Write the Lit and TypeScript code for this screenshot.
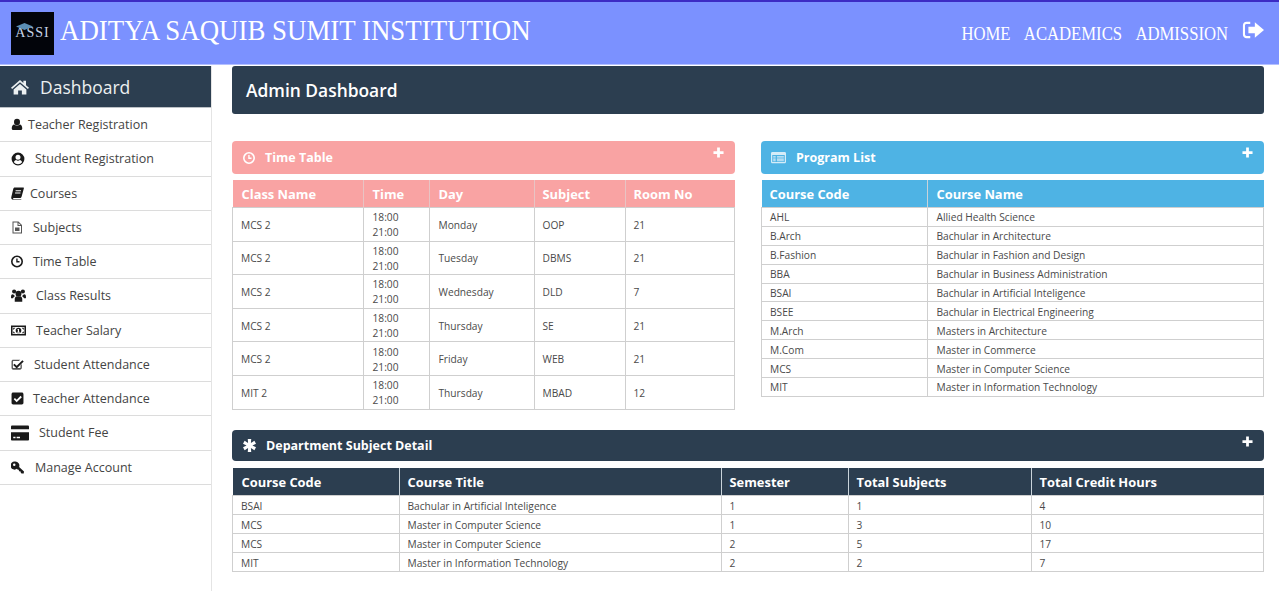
import {LitElement, html, svg, css} from 'lit';
import {customElement} from 'lit/decorators.js';

const icons: Record<string, unknown> = {
    home: svg`<path d="M12 2.500 0 13l1.500 1.800L12 5.800l10.500 9L24 13l-4-3.400V3.500h-3.500v3z"/><path d="M12 8 3.500 15.200V22h6v-5.500h5V22h6v-6.800z"/>`,
    user: svg`<ellipse cx="12" cy="7" rx="6" ry="6.500"/><path d="M4.500 23C2.500 23 1.500 21.800 1.500 20c0-4.500 1.700-8 5-8 1.300 1.300 3.300 2.200 5.500 2.200s4.200-.9 5.500-2.200c3.300 0 5 3.500 5 8 0 1.800-1 3-3 3z"/>`,
    circleUser: svg`<path fill-rule="evenodd" d="M12 1a11 11 0 1 0 0 22 11 11 0 0 0 0-22zm0 3.500a4.300 4.300 0 1 1 0 8.600 4.300 4.300 0 0 1 0-8.600zM5 17.500c.6-2.300 2.200-3.600 3.700-3.800 1 .7 2.100 1.100 3.300 1.100s2.300-.4 3.300-1.100c1.500.2 3.100 1.500 3.700 3.800A8.800 8.800 0 0 1 12 20.800a8.800 8.800 0 0 1-7-3.300z"/>`,
    book: svg`<path d="M7 1h15.500c1 0 1.500.8 1.200 1.800L19.500 18c-.5 1.600-1.500 2.500-3.200 2.500H5c-.8 0-1.200.4-1.200 1s.4 1 1.200 1h14v1H4c-2.500 0-4-2-3.500-4.500L4 4c.4-1.800 1.500-3 3-3zm1.500 5v2h10V6zm-1 4v2h10v-2z" fill-rule="evenodd"/>`,
    file: svg`<path fill="#555" fill-rule="evenodd" d="M3 0h12l7 7v17H3zm2 2v20h15V9h-7V2zM15 3v4h4zM8 12h9v7H8z"/>`,
    clock: svg`<path fill-rule="evenodd" d="M12 0a12 12 0 1 0 0 24 12 12 0 0 0 0-24zm0 3.200a8.800 8.800 0 1 1 0 17.600 8.800 8.800 0 0 1 0-17.600zM10.500 6v7.800h6.500v-2.600h-3.800V6z"/>`,
    users: svg`<circle cx="12" cy="9" r="4.800"/><circle cx="5" cy="5.500" r="3.300"/><circle cx="19" cy="5.500" r="3.300"/><path d="M6 22v-4.500c0-2.500 1.500-4 3-4.500 1.800 1 4.200 1 6 0 1.500.5 3 2 3 4.500V22zM0 15c0-3 .8-5 2.500-5 1.300.8 2 1 3 1-.3 1.500 0 2.300.5 3-1.500.5-2.300 1.300-3 2.500H1c-.6 0-1-.6-1-1.500zm24 0c0-3-.8-5-2.500-5-1.300.8-2 1-3 1 .3 1.500 0 2.300-.5 3 1.500.5 2.300 1.300 3 2.500h2c.6 0 1-.6 1-1.500z"/>`,
    money: svg`<path fill-rule="evenodd" d="M0 4h24v16H0zm2.500 2.500v11h19v-11zM12 7.500a4.500 4.500 0 1 1 0 9 4.500 4.500 0 0 1 0-9zM3.500 7.500h3.500l-3.500 3.500zm17 0v3.500L17 7.500zm-17 9V13L7 16.500zm17 0H17l3.500-3.500z"/><path d="M11 9.500h1.800v4.500H14v1.500h-4V14h1v-3h-1z" fill="#fff"/>`,
    checkO: svg`<path d="M4 3h13l-2.400 2.500H4.500c-.6 0-1 .4-1 1v11c0 .6.400 1 1 1h12c.6 0 1-.4 1-1v-4l2.500-2.500V18c0 2-1.500 3.500-3.500 3.500H4C2 21.500 1 20 1 18V6c0-1.700 1.300-3 3-3z" fill="#555"/><path d="m6.500 10.500 4 4L21 4l2.500 2.500-13 13-6.500-6.500z"/>`,
    check: svg`<path fill-rule="evenodd" d="M4 1h16c1.700 0 3 1.300 3 3v16c0 1.700-1.300 3-3 3H4c-1.700 0-3-1.300-3-3V4c0-1.700 1.300-3 3-3zm6.500 18L20 9.500 17.700 7l-7.200 7.200-3.200-3.200L5 13.400z"/>`,
    card: svg`<path d="M1.500 2h21c.8 0 1.500.7 1.500 1.500V7H0V3.500C0 2.700.7 2 1.500 2zM0 11h24v9.500c0 .8-.7 1.500-1.500 1.500h-21C.7 22 0 21.300 0 20.500zm3 6v2h3v-2zm4.500 0v2h4.500v-2z"/>`,
    key: svg`<path fill-rule="evenodd" d="M8 1a7.500 7.500 0 0 1 7 10l9 8.500-.5 3.500h-4l-1.500-1.500v-2h-2l-1.500-1.500v-2h-2l-1.500-1.500A7.500 7.500 0 1 1 8 1zM6 4.500a2.300 2.300 0 1 0 0 4.600 2.300 2.300 0 0 0 0-4.600z"/>`,
    signOut: svg`<path d="M9 3H5C2.500 3 1 4.800 1 7v10c0 2.200 1.500 4 4 4h4v-2.500H5c-1 0-1.700-.7-1.700-1.500V7c0-.8.7-1.500 1.700-1.500h4z"/><path d="M14 3.500 24 12l-10 8.500V15.500H7v-7h7z"/>`,
    plus: svg`<path d="M9 1h6v8h8v6h-8v8H9v-8H1V9h8z"/>`,
    asterisk: svg`<path d="M8.800 0h6.400l-.6 7.400 6.400-4 3.200 5.500-6.800 3.100 6.800 3.100-3.200 5.500-6.400-4 .6 7.400H8.800l.6-7.400-6.400 4-3.200-5.500L6.600 12-.2 8.900 3 3.400l6.400 4z"/>`,
    list: svg`<path fill-rule="evenodd" d="M2 3h20c1 0 2 1 2 2v14c0 1-1 2-2 2H2c-1 0-2-1-2-2V5c0-1 1-2 2-2zm0 5v11h20V8z"/><path d="M3.500 10h4v2h-4zm6 0h11v2h-11zm-6 3.500h4v2h-4zm6 0h11v2h-11zm-6 3h4v1.500h-4zm6 0h11v1.500h-11z"/>`,
};

function icon(name: string) {
    return html`<svg class="icon" viewBox="0 0 24 24" fill="currentColor">${icons[name]}</svg>`;
}

// icon size and gap differ per row in the original, so each row carries its own classes
const menu = [
    ['user', 'Teacher Registration', 'g5', 'i12'],
    ['circleUser', 'Student Registration', 'g10', 'i14'],
    ['book', 'Courses', 'g6', 'i13'],
    ['file', 'Subjects', 'g10', 'i12'],
    ['clock', 'Time Table', 'g10', 'i12'],
    ['users', 'Class Results', 'g10', 'i15'],
    ['money', 'Teacher Salary', 'g10', 'i15'],
    ['checkO', 'Student Attendance', 'g10', 'i13'],
    ['check', 'Teacher Attendance', 'g9', 'i13'],
    ['card', 'Student Fee', 'g10', 'i18'],
    ['key', 'Manage Account', 'g11', 'i13'],
];

const timeTable = [
    ['MCS 2', 'Monday', 'OOP', '21'],
    ['MCS 2', 'Tuesday', 'DBMS', '21'],
    ['MCS 2', 'Wednesday', 'DLD', '7'],
    ['MCS 2', 'Thursday', 'SE', '21'],
    ['MCS 2', 'Friday', 'WEB', '21'],
    ['MIT 2', 'Thursday', 'MBAD', '12'],
];

const programs = [
    ['AHL', 'Allied Health Science'],
    ['B.Arch', 'Bachular in Architecture'],
    ['B.Fashion', 'Bachular in Fashion and Design'],
    ['BBA', 'Bachular in Business Administration'],
    ['BSAI', 'Bachular in Artificial Inteligence'],
    ['BSEE', 'Bachular in Electrical Engineering'],
    ['M.Arch', 'Masters in Architecture'],
    ['M.Com', 'Master in Commerce'],
    ['MCS', 'Master in Computer Science'],
    ['MIT', 'Master in Information Technology'],
];

const subjects = [
    ['BSAI', 'Bachular in Artificial Inteligence', '1', '1', '4'],
    ['MCS', 'Master in Computer Science', '1', '3', '10'],
    ['MCS', 'Master in Computer Science', '2', '5', '17'],
    ['MIT', 'Master in Information Technology', '2', '2', '7'],
];

@customElement('app-root')
export class AppRoot extends LitElement {

    static override styles = css`
        :host {
            display: block;
            height: 591px;
            overflow: hidden;
            background: #fff;
            font-family: "Open Sans", "Noto Sans", sans-serif;
            color: #444;
        }

        .icon {
            display: block;
            flex: none;
            width: 14px;
            height: 14px;
        }

        /* top bar */
        .topbar {
            height: 65px;
            box-sizing: border-box;
            border-top: 2px solid #3c2bc4;
            border-bottom: 1px solid #b4c0ff;
            background: #7b91ff;
            display: flex;
            align-items: center;
            padding: 0 15px 0 11px;
            color: #fff;
            font-family: "Liberation Serif", serif;
        }

        .logo {
            width: 43px;
            height: 43px;
            background: #02040a;
            color: #c5d3e6;
            display: flex;
            align-items: center;
            justify-content: center;
            font-size: 14px;
            letter-spacing: 1px;
            position: relative;
            flex: none;
        }

        .logo svg {
            position: absolute;
            left: 5px;
            top: 11px;
            width: 17px;
            height: 9px;
        }

        /* the original face is narrower than Liberation Serif */
        .brand {
            font-size: 29px;
            margin-left: 6px;
            flex: 1;
            white-space: nowrap;
            transform: scaleX(.927);
            transform-origin: left center;
            margin-top: -5px;
        }

        .nav {
            display: flex;
            align-items: center;
            font-size: 19.400px;
            gap: 15.500px;
            padding-top: 2px;
            transform: scaleX(.86);
            transform-origin: right center;
        }

        .logout {
            width: 22px;
            height: 22px;
            margin-top: -7px;
            margin-left: 14px;
            flex: none;
        }

        .body {
            display: flex;
            height: 526px;
        }

        /* sidebar */
        .side {
            width: 212px;
            flex: none;
            box-sizing: border-box;
            border-right: 1px solid #e4e4e4;
            margin-top: 1px;
        }

        .side-head {
            height: 41px;
            background: #2c3e50;
            color: #ecf0f1;
            display: flex;
            align-items: center;
            padding-left: 11px;
            font-size: 17.500px;
            gap: 11px;
            border-bottom: 1px solid #bcc1c6;
        }

        .side-head .icon {
            width: 18px;
            height: 18px;
        }

        .item {
            height: 34.250px;
            box-sizing: border-box;
            border-bottom: 1px solid #dcdcdc;
            display: flex;
            align-items: center;
            padding-left: 11px;
            font-size: 12.500px;
            color: #444;
        }

        .item .icon {
            color: #1a1a1a;
        }

        .i12 .icon { width: 12px; height: 13px; }
        .i13 .icon { width: 13px; height: 13px; }
        .i14 .icon { width: 14px; height: 14px; }
        .i15 .icon { width: 15px; height: 15px; }
        .i18 .icon { width: 18px; height: 18px; }
        .g5 { gap: 5px; }
        .g6 { gap: 6px; }
        .g9 { gap: 9px; }
        .g10 { gap: 10px; }
        .g11 { gap: 11px; }

        /* main column */
        .main {
            flex: 1;
            padding: 1px 15px 0 20px;
        }

        .title {
            height: 48px;
            background: #2c3e50;
            color: #fff;
            border-radius: 3px;
            display: flex;
            align-items: center;
            padding-left: 14px;
            font-size: 17.400px;
            font-weight: 600;
        }

        .columns {
            display: grid;
            grid-template-columns: 503px 503px;
            justify-content: space-between;
            margin-top: 27px;
            height: 289px;
        }

        .bar {
            height: 33px;
            border-radius: 4px;
            color: #fff;
            display: flex;
            align-items: center;
            padding: 0 11px;
            gap: 10px;
            font-size: 12.500px;
            font-weight: 700;
            position: relative;
        }

        .bar .plus {
            position: absolute;
            top: 6px;
            right: 11px;
        }

        .bar .plus .icon {
            width: 11px;
            height: 11px;
        }

        .pink { background: #f9a3a3; }
        .blue { background: #4eb3e4; padding-left: 10px; }
        .dark { background: #2c3e50; }

        .bar.dark { height: 31px; }

        .pink > .icon { width: 12px; height: 12px; }
        .blue > .icon { width: 15px; height: 15px; color: #d5ecf8; }
        .dark > .icon { width: 13px; height: 13px; }

        table {
            width: 100%;
            margin-top: 6px;
            table-layout: fixed;
            border-collapse: collapse;
            font-size: 10.200px;
        }

        th {
            color: #fff;
            text-align: left;
            font-size: 12.900px;
            font-weight: 700;
            height: 26px;
            padding: 1px 0 0 8px;
            border-left: 1px solid #c9d3da;
        }

        td {
            padding: 0 0 0 8px;
            border: 1px solid #cfcfcf;
            color: #4a4a4a;
        }

        th:first-child { border-left: 0; padding-left: 9px; }

        .pink-head th { background: #f9a3a3; border-left-color: #e8c4c4; }
        .blue-head th { background: #4eb3e4; }
        .dark-head th { background: #2c3e50; height: 27px; padding-top: 0; }

        .times td {
            height: 30.600px;
            padding-top: 2px;
            line-height: 15px;
        }

        .tight td {
            height: 15.900px;
            padding-top: 2px;
            line-height: 15px;
        }

        .dept { margin-top: 7px; }

        .dept td {
            height: 15px;
            padding-top: 3px;
        }

        .times th:nth-child(1) { width: 121px; }
        .times th:nth-child(2) { width: 56px; }
        .times th:nth-child(3) { width: 95px; }
        .times th:nth-child(4) { width: 82px; }
        .times th:nth-child(2), .times td:nth-child(2) { padding-left: 9px; }
        .times th:nth-child(3), .times td:nth-child(3) { padding-left: 9px; }

        .prog th:nth-child(1) { width: 157px; padding-left: 8px; }
        .prog th:nth-child(2), .prog td:nth-child(2) { padding-left: 9px; }

        .dept th:nth-child(1) { width: 157px; }
        .dept th:nth-child(2) { width: 313px; }
        .dept th:nth-child(3) { width: 118px; }
        .dept th:nth-child(4) { width: 174px; }
    `;

    override render() {
        return html`
        <header class="topbar">
            <div class="logo">
                <svg viewBox="0 0 17 9" fill="#5b8fb5"><path d="M8.500 0 17 3.500 8.500 7 0 3.500z"/></svg>
                ASSI
            </div>
            <div class="brand">ADITYA SAQUIB SUMIT INSTITUTION</div>
            <nav class="nav">
                <span>HOME</span>
                <span>ACADEMICS</span>
                <span>ADMISSION</span>
            </nav>
            <svg class="logout" viewBox="0 0 24 24" fill="currentColor">${icons.signOut}</svg>
        </header>
        <div class="body">
            <aside class="side">
                <div class="side-head">${icon('home')}Dashboard</div>
                ${menu.map(m => html`
                    <div class="item ${m[2]} ${m[3]}">${icon(m[0])}<span>${m[1]}</span></div>
                `)}
            </aside>
            <main class="main">
                <div class="title">Admin Dashboard</div>
                <div class="columns">
                    <section>
                        <div class="bar pink">${icon('clock')}<span>Time Table</span><span class="plus">${icon('plus')}</span></div>
                        <table class="times pink-head">
                            <thead><tr><th>Class Name</th><th>Time</th><th>Day</th><th>Subject</th><th>Room No</th></tr></thead>
                            <tbody>
                                ${timeTable.map(r => html`
                                    <tr><td>${r[0]}</td><td>18:00<br>21:00</td><td>${r[1]}</td><td>${r[2]}</td><td>${r[3]}</td></tr>
                                `)}
                            </tbody>
                        </table>
                    </section>
                    <section>
                        <div class="bar blue">${icon('list')}<span>Program List</span><span class="plus">${icon('plus')}</span></div>
                        <table class="tight prog blue-head">
                            <thead><tr><th>Course Code</th><th>Course Name</th></tr></thead>
                            <tbody>
                                ${programs.map(r => html`<tr><td>${r[0]}</td><td>${r[1]}</td></tr>`)}
                            </tbody>
                        </table>
                    </section>
                </div>
                <section>
                    <div class="bar dark">${icon('asterisk')}<span>Department Subject Detail</span><span class="plus">${icon('plus')}</span></div>
                    <table class="tight dept dark-head">
                        <thead><tr><th>Course Code</th><th>Course Title</th><th>Semester</th><th>Total Subjects</th><th>Total Credit Hours</th></tr></thead>
                        <tbody>
                            ${subjects.map(r => html`<tr>${r.map(c => html`<td>${c}</td>`)}</tr>`)}
                        </tbody>
                    </table>
                </section>
            </main>
        </div>
        `;
    }
}
